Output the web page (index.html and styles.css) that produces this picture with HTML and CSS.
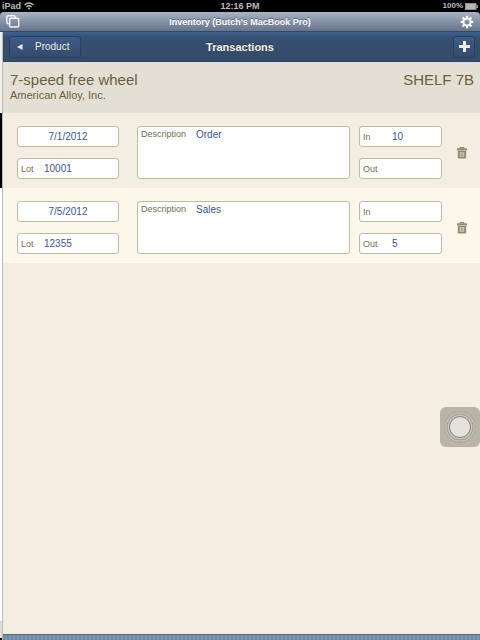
FILE: index.html
```html
<!DOCTYPE html>
<html lang="en">
<head>
<meta charset="utf-8">
<meta name="viewport" content="width=device-width, initial-scale=1">
<title>Inventory</title>
<link rel="stylesheet" href="styles.css">
</head>
<body>
<div class="status">
  <div class="status-left"><span>iPad</span>
    <svg width="10" height="8" viewBox="0 0 10 8" fill="none" stroke="#bdbdbd" stroke-width="1.3"><path d="M.6 3Q5-1 9.4 3M2.4 4.9Q5 2.6 7.6 4.9"/><path d="M3.6 6.1Q5 5 6.4 6.1L5 7.8Z" fill="#bdbdbd" stroke="none"/></svg>
  </div>
  <div class="clock">12:16 PM</div>
  <div class="status-right"><span>100%</span>
    <svg width="13" height="7" viewBox="0 0 13 7"><rect x=".5" y=".5" width="10.5" height="6" fill="#b5b5b5" stroke="#929292"/><path d="M11.5 2h1.3v3h-1.3z" fill="#b5b5b5"/></svg>
  </div>
</div>
<header class="titlebar">
  <button class="plain" aria-label="Windows"><svg width="14" height="13" viewBox="0 0 14 13" fill="none" stroke="#f3f6fa" stroke-width="1.4"><path d="M3.2 8.7H2.3Q.8 8.7.8 7.2V2.3Q.8.8 2.3.8H7.8Q9.3.8 9.3 2.3V3"/><rect x="3.7" y="3.3" width="9" height="8.7" rx="1"/></svg></button>
  <h1>Inventory (Butch's MacBook Pro)</h1>
  <button class="plain" aria-label="Settings"><svg width="14" height="14" viewBox="-7 -7 14 14" fill="none" stroke="#fff"><circle r="3.6" stroke-width="2"/><path stroke-width="2.1" d="M0-4V-6.3M0 4V6.3M-4 0H-6.3M4 0H6.3M-2.8-2.8-4.5-4.5M2.8-2.8 4.5-4.5M-2.8 2.8-4.5 4.5M2.8 2.8 4.5 4.5"/></svg></button>
</header>
<div class="stage">
  <div class="edge"><i class="edge-head"></i><i class="edge-selected"></i><i class="edge-list"></i><i class="edge-foot"></i></div>
  <main class="panel">
    <nav class="navbar">
      <div class="nav-side"><button class="nav-button back"><svg width="6" height="6" viewBox="0 0 6 6"><path d="M0 3 5.5 0V6Z" fill="#eee9dc"/></svg>Product</button></div>
      <h2>Transactions</h2>
      <div class="nav-side end"><button class="nav-button add" aria-label="Add transaction"><svg width="11" height="11" viewBox="0 0 11 11"><path d="M4 0H7V4H11V7H7V11H4V7H0V4H4Z" fill="#f1ecdf"/></svg></button></div>
    </nav>
    <section class="product">
      <div><h3>7-speed free wheel</h3><p>American Alloy, Inc.</p></div>
      <div class="shelf">SHELF 7B</div>
    </section>
    <section class="row">
      <div class="stack">
        <div class="field date"><input aria-label="Date" value="7/1/2012"></div>
        <div class="field"><label for="lot1">Lot</label><input id="lot1" value="10001"></div>
      </div>
      <div class="field description"><label for="desc1">Description</label><textarea id="desc1">Order</textarea></div>
      <div class="stack quantity">
        <div class="field"><label for="in1">In</label><input id="in1" value="10"></div>
        <div class="field"><label for="out1">Out</label><input id="out1"></div>
      </div>
      <button class="plain trash" aria-label="Delete"><svg width="10" height="12" viewBox="0 0 10 12"><path d="M3.2 1.5V.6H6.8V1.5" fill="none" stroke="#93896f" stroke-width="1.1"/><path d="M0 1.3H10V3.5H0ZM.8 4H9.2V10.4Q9.2 11.6 8 11.6H2Q.8 11.6.8 10.4Z" fill="#93896f"/><path d="M3.3 5V10M5 5V10M6.7 5V10" stroke="#eee8da" stroke-width=".7"/></svg></button>
    </section>
    <section class="row light">
      <div class="stack">
        <div class="field date"><input aria-label="Date" value="7/5/2012"></div>
        <div class="field"><label for="lot2">Lot</label><input id="lot2" value="12355"></div>
      </div>
      <div class="field description"><label for="desc2">Description</label><textarea id="desc2">Sales</textarea></div>
      <div class="stack quantity">
        <div class="field"><label for="in2">In</label><input id="in2"></div>
        <div class="field"><label for="out2">Out</label><input id="out2" value="5"></div>
      </div>
      <button class="plain trash" aria-label="Delete"><svg width="10" height="12" viewBox="0 0 10 12"><path d="M3.2 1.5V.6H6.8V1.5" fill="none" stroke="#93896f" stroke-width="1.1"/><path d="M0 1.3H10V3.5H0ZM.8 4H9.2V10.4Q9.2 11.6 8 11.6H2Q.8 11.6.8 10.4Z" fill="#93896f"/><path d="M3.3 5V10M5 5V10M6.7 5V10" stroke="#f5f0e2" stroke-width=".7"/></svg></button>
    </section>
    <div class="bottom"></div>
  </main>
</div>
<button class="assist" aria-label="Assistive touch"><svg width="40" height="40" viewBox="0 0 40 40"><circle cx="20" cy="20" r="15.5" fill="#c3bfb2" stroke="#aaa698"/><circle cx="20" cy="20" r="13" fill="#c9c6bb" stroke="#9f9b8f"/><circle cx="20" cy="20" r="10.5" fill="#e3e2df" stroke="#85827a"/></svg></button>
</body>
</html>
```
FILE: styles.css
```css
* { box-sizing: border-box; }

body {
  margin: 0;
  min-height: 100vh;
  display: flex;
  flex-direction: column;
  background: #000;
  font-family: "Liberation Sans", Arial, sans-serif;
}

h1, h2, h3, p { margin: 0; font-weight: normal; }
svg { display: block; }
button, input, textarea { font: inherit; margin: 0; padding: 0; border: 0; }
.plain { background: none; }

.status {
  display: flex;
  align-items: center;
  height: 12px;
  padding: 0 2px;
  color: #bdbdbd;
  font-size: 9px;
  font-weight: bold;
  line-height: 12px;
}
.status-left, .status-right { flex: 1; display: flex; align-items: center; gap: 3px; }
.status-right { justify-content: flex-end; gap: 2px; font-size: 8px; }

.titlebar {
  display: flex;
  align-items: center;
  justify-content: space-between;
  height: 20px;
  padding: 0 6px;
  border-radius: 4px 4px 0 0;
  border-bottom: 1px solid #3c4656;
  background: linear-gradient(#aab4c4, #8591a7 50%, #66748e);
}
.titlebar h1 {
  color: #fff;
  font-size: 9px;
  font-weight: bold;
  line-height: 18px;
  text-shadow: 0 -1px 0 #56627a;
}

.stage { flex: 1; display: flex; }
.edge { width: 2px; display: flex; flex-direction: column; background: #fff; }
.edge-head { height: 81px; background: #f0f0f0; }
.edge-selected { height: 75px; background: #000; }
.edge-list { flex: 1; }
.edge-foot { height: 19px; background: #ddd; border-bottom: 2px solid #000; }

.panel {
  flex: 1;
  display: flex;
  flex-direction: column;
  border-left: 1px solid #bdbab0;
  background: #f4ede1;
}

.navbar {
  display: flex;
  align-items: center;
  height: 30px;
  padding: 0 5px 0 6px;
  border-bottom: 1px solid #2a4469;
  background: linear-gradient(#3f618f, #364f72 20%, #344a68);
}
.navbar h2 { margin-right: 4px; color: #f5f1e8; font-size: 11px; font-weight: bold; line-height: 14px; text-shadow: 0 -1px 0 #23364f; }
.nav-side { flex: 1; display: flex; }
.end { justify-content: flex-end; }
.nav-button {
  display: flex;
  align-items: center;
  justify-content: center;
  height: 22px;
  border: 1px solid #2b4060;
  border-radius: 3px;
  background: linear-gradient(#3f5c88, #334b6c);
  color: #f0ece2;
  font-size: 10px;
}
.back { width: 72px; justify-content: flex-start; gap: 12px; padding-left: 7px; }
.add { width: 22px; }

.product {
  display: flex;
  justify-content: space-between;
  height: 51px;
  padding: 9px 6px 0 7px;
  background: #e3dfd4;
  color: #6a5f40;
}
.product h3, .shelf { font-size: 15px; line-height: 17px; }
.product p { font-size: 11px; line-height: 14px; }

.row {
  display: flex;
  align-items: stretch;
  padding: 13px 13px 9px 14px;
}
.light { background: #fbf7eb; }
.stack { display: flex; flex-direction: column; gap: 11px; width: 102px; }
.quantity { width: 83px; }
.field {
  display: flex;
  align-items: center;
  height: 21px;
  padding: 0 3px;
  border: 1px solid #bfb9a6;
  border-radius: 3px;
  background: #fff;
}
.field label { width: 23px; color: #746b55; font-size: 9px; }
.field input, .field textarea {
  flex: 1;
  min-width: 0;
  background: none;
  color: #40568c;
  font-size: 10px;
}
.field textarea { align-self: stretch; resize: none; line-height: 12px; }
.date input { text-align: center; }
.quantity label { width: 29px; }
.description { flex: 1; height: auto; align-items: flex-start; margin: 0 9px 0 18px; padding-top: 2px; }
.description label { width: 55px; line-height: 11px; }
.trash { align-self: center; margin-left: 15px; }

.bottom {
  height: 6px;
  margin-top: auto;
  border-top: 1px solid #536b82;
  background: repeating-linear-gradient(90deg, #6d88a4 0 2px, #7d97b0 2px 4px);
}

.assist {
  position: absolute;
  right: 0;
  top: 407px;
  border-radius: 6px;
  background: #b8b4a7;
}
```
